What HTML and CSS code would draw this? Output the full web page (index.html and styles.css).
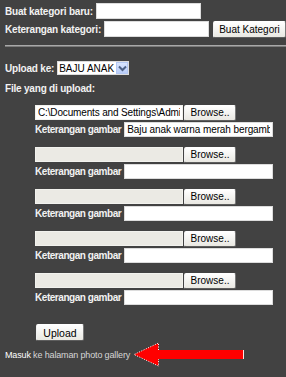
FILE: index.html
```html
<!DOCTYPE html>
<html>
<head>
<title>Upload Photo</title>
<link rel="stylesheet" href="styles.css">
</head>
<body>

<!-- Kategori baru -->
<form name="frmKategori" method="post" action="#">
  <div class="row rowKategori">
    <label for="namaKategori">Buat kategori baru:</label>
    <input type="text" id="namaKategori" class="txtKategori" />
  </div>
  <div class="row rowKategori">
    <label for="ketKategori">Keterangan kategori:</label>
    <input type="text" id="ketKategori" class="txtKategori" />
    <input type="submit" class="btn btnKategori" value="Buat Kategori" />
  </div>
</form>

<hr class="garis" />

<!-- Upload gambar -->
<form name="frmUpload" method="post" action="#">
  <div class="row rowUploadKe">
    <label for="album">Upload ke:</label>
    <div class="select" id="album">
      <span class="selectText">BAJU ANAK</span>
      <span class="selectArrow">
        <svg width="9" height="7" viewBox="0 0 9 7"><path d="M1 1.5 L4.5 5 L8 1.5" fill="none" stroke="#4d6185" stroke-width="2"/></svg>
      </span>
    </div>
  </div>

  <div class="row rowJudul">
    <label>File yang di upload:</label>
  </div>

  <div class="files">
    <div class="fileGroup">
      <div class="row fileRow">
        <input type="text" class="fileText filled" value="C:\Documents and Settings\Administrator\My Documents\baju.jpg" readonly />
        <input type="button" class="btn btnBrowse" value="Browse.." />
      </div>
      <div class="row ketRow">
        <label>Keterangan gambar</label>
        <input type="text" class="txtGambar" value="Baju anak warna merah bergambar" />
      </div>
    </div>

    <div class="fileGroup">
      <div class="row fileRow">
        <input type="text" class="fileText" readonly />
        <input type="button" class="btn btnBrowse" value="Browse.." />
      </div>
      <div class="row ketRow">
        <label>Keterangan gambar</label>
        <input type="text" class="txtGambar" />
      </div>
    </div>

    <div class="fileGroup">
      <div class="row fileRow">
        <input type="text" class="fileText" readonly />
        <input type="button" class="btn btnBrowse" value="Browse.." />
      </div>
      <div class="row ketRow">
        <label>Keterangan gambar</label>
        <input type="text" class="txtGambar" />
      </div>
    </div>

    <div class="fileGroup">
      <div class="row fileRow">
        <input type="text" class="fileText" readonly />
        <input type="button" class="btn btnBrowse" value="Browse.." />
      </div>
      <div class="row ketRow">
        <label>Keterangan gambar</label>
        <input type="text" class="txtGambar" />
      </div>
    </div>

    <div class="fileGroup">
      <div class="row fileRow">
        <input type="text" class="fileText" readonly />
        <input type="button" class="btn btnBrowse" value="Browse.." />
      </div>
      <div class="row ketRow">
        <label>Keterangan gambar</label>
        <input type="text" class="txtGambar" />
      </div>
    </div>

    <input type="submit" class="btn btnUpload" value="Upload" />
  </div>
</form>

<div class="row rowGallery">
  <a href="#" class="aGallery"><span class="masuk">Masuk</span> ke halaman photo gallery</a>
  <svg class="panah" width="112" height="25" viewBox="0 0 112 25">
    <rect x="25" y="8" width="85" height="9" fill="#ff0000" />
    <polygon points="1,12.5 25.5,1 25.5,24" fill="#ff0000" />
    <polyline points="25.5,8 25.5,1 1,12.5 25.5,24 25.5,17" fill="none" stroke="#ffffff" stroke-width="1" stroke-dasharray="1 1.5" />
    <line x1="110.5" y1="8" x2="110.5" y2="17" stroke="#ffe0e0" stroke-width="1" />
  </svg>
</div>

</body>
</html>
```

FILE: styles.css
```css
body {
  margin: 0;
  padding: 2px 0 0 5px;
  background-color: #424242;
  color: #F2F2F2;
  font-family: "Liberation Sans", Arial, sans-serif;
  font-size: 10px;
}
form {
  margin: 0;
}
label {
  font-weight: bold;
  letter-spacing: -0.2px;
  white-space: nowrap;
}
input {
  font-family: "Liberation Sans", Arial, sans-serif;
  font-size: 10px;
  color: #000000;
  margin: 0;
  box-sizing: border-box;
}
input[type='text'] {
  border: 1px solid #DCDCDC;
  background-color: #FFFFFF;
  padding: 0 2px;
  outline: none;
}
.row {
  display: flex;
  align-items: center;
  gap: 3px;
}
.rowKategori {
  height: 18px;
}
.txtKategori {
  width: 105px;
  height: 16px;
}
.btn {
  border: 1px solid;
  border-color: #FFFFFF #7A7A7A #5E5E5E #F0F0F0;
  border-radius: 2px;
  background: linear-gradient(#FFFFFF, #E9E8E2);
  padding: 0;
  cursor: pointer;
}
.btnKategori {
  width: 73px;
  height: 17px;
  margin-left: 1px;
}
.garis {
  margin: 7px 0 0 0;
  border: 0;
  border-top: 1px solid #A8A8A8;
  border-bottom: 1px solid #7A7A7A;
  height: 0;
}
.rowUploadKe {
  height: 14px;
  margin-top: 14px;
}
.select {
  display: flex;
  align-items: center;
  justify-content: space-between;
  width: 72px;
  height: 14px;
  box-sizing: border-box;
  background-color: #FFFFFF;
  border: 1px solid #DCDCDC;
  color: #000000;
  padding-left: 1px;
}
.selectArrow {
  display: flex;
  align-items: center;
  justify-content: center;
  width: 12px;
  height: 12px;
  box-sizing: border-box;
  background: linear-gradient(#D8E4FD, #B9CDF8);
  border: 1px solid #B4C8F3;
}
.rowJudul {
  height: 14px;
  margin-top: 6px;
}
.files {
  padding-left: 30px;
  margin-top: 9px;
}
.fileGroup {
  margin-bottom: 9px;
}
.fileRow {
  height: 17px;
  gap: 1px;
}
.fileText {
  width: 148px;
  height: 15px;
}
input.fileText {
  background-color: #EBEAE4;
  border-color: #F2F2EE;
  letter-spacing: -0.15px;
}
input.fileText.filled {
  background-color: #FFFFFF;
}
.btnBrowse {
  width: 52px;
  height: 16px;
}
.ketRow {
  height: 16px;
}
.ketRow label {
  letter-spacing: -0.45px;
}
.txtGambar {
  width: 149px;
  height: 15px;
  letter-spacing: -0.1px;
}
.btnUpload {
  width: 48px;
  height: 17px;
  margin: 10px 0 0 1px;
  font-size: 10.5px;
}
.rowGallery {
  height: 25px;
  margin-top: 1px;
}
.aGallery {
  color: #D6D6D6;
  text-decoration: none;
  font-size: 9px;
  letter-spacing: -0.15px;
}
.masuk {
  color: #FFFFFF;
}
.panah {
  display: block;
}
```
